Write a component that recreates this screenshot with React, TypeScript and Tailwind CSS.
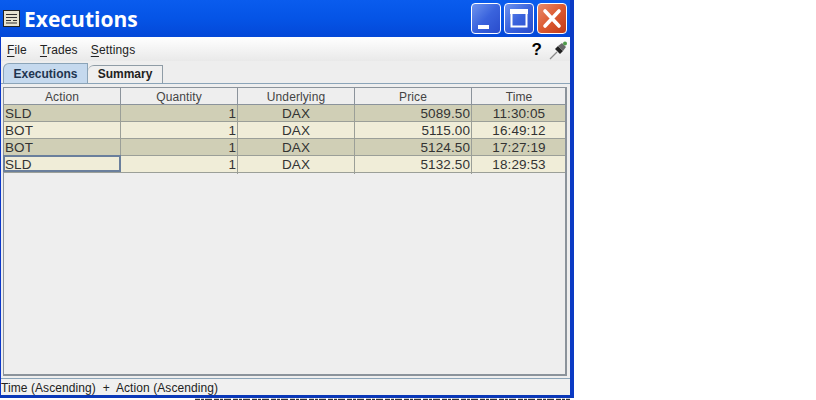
const rows = [
  ['SLD', '1', 'DAX', '5089.50', '11:30:05'],
  ['BOT', '1', 'DAX', '5115.00', '16:49:12'],
  ['BOT', '1', 'DAX', '5124.50', '17:27:19'],
  ['SLD', '1', 'DAX', '5132.50', '18:29:53'],
]

const headers = ['Action', 'Quantity', 'Underlying', 'Price', 'Time']
const colClass = 'grid grid-cols-[117px_117px_117px_117px_94px]'

const WinButton = ({kind}: {kind: 'min' | 'max' | 'close'}) => (
  <div
    className={`w-[30px] h-[31px] rounded-[4px] border border-white flex items-center justify-center ${
      kind === 'close'
        ? 'bg-gradient-to-br from-[#e88a6a] via-[#dc5a30] to-[#c03a18]'
        : 'bg-gradient-to-br from-[#6f93ee] via-[#3a63dd] to-[#2a4ccc]'
    }`}
  >
    <svg width="28" height="29" viewBox="0 0 28 29">
      {kind === 'min' && <rect x="6" y="21" width="11" height="4" fill="#fff" />}
      {kind === 'max' && <path d="M6.5 7.5h15v15h-15z M6 6h16v3H6z" fill="none" stroke="#fff" strokeWidth="2" />}
      {kind === 'close' && <path d="M7 7l14 15M21 7L7 22" stroke="#fff" strokeWidth="3.6" strokeLinecap="round" />}
    </svg>
  </div>
)

const MenuItem = ({first, rest}: {first: string; rest: string}) => (
  <span>
    <span className="underline underline-offset-2">{first}</span>
    {rest}
  </span>
)

export default function App() {
  return (
    <div className="w-[816px] h-[400px] bg-white overflow-hidden font-['Liberation_Sans',sans-serif]">
      <div className="w-[574px] h-[398px] flex flex-col bg-[#0a36c8] border-r-[4px] border-r-[#0b3ac4] border-b-[3px] border-b-[#0a38b8]">
        {/* title bar */}
        <div className="h-[37px] shrink-0 flex items-center pl-[3px] pr-[2px] bg-gradient-to-b from-[#0a5cee] via-[#0554e6] to-[#0448d8]">
          <svg width="17" height="17" viewBox="0 0 17 17" className="shrink-0">
            <rect x="0.5" y="0.5" width="16" height="16" fill="#e8e4d0" stroke="#222" />
            <path d="M3 4.5h11M3 7.5h11M3 10.5h5M10 10.5h4M3 13h11" stroke="#333" strokeWidth="1.2" />
          </svg>
          <span className="ml-[4px] mt-[2px] text-white text-[21px] leading-none font-bold font-['Open_Sans',sans-serif]">
            Executions
          </span>
          <div className="ml-auto flex gap-[3px] mb-[1px] mr-[1px]">
            <WinButton kind="min" />
            <WinButton kind="max" />
            <WinButton kind="close" />
          </div>
        </div>
        <div className="flex-1 flex flex-col bg-[#eeeeee] min-h-0 ml-[1px]">
          {/* menu */}
          <div className="h-[24px] shrink-0 flex items-center gap-[13px] pt-[1px] pl-[6px] pr-[1px] text-[12px] tracking-[0.15px] text-[#222] bg-gradient-to-b from-white to-[#e9e9e9]">
            <MenuItem first="F" rest="ile" />
            <MenuItem first="T" rest="rades" />
            <MenuItem first="S" rest="ettings" />
            <div className="ml-auto flex items-center gap-[7px]">
              <span className="text-[17px] leading-none font-bold text-black">?</span>
              <svg width="20" height="20" viewBox="0 0 20 20">
                <path d="M1 19l7-7" stroke="#8a8a8a" strokeWidth="1.2" />
                <path d="M6 9l5 5 3-3-5-5z" fill="#222" />
                <path d="M9 6l4-3 4 4-3 4z" fill="#6a6a6a" />
                <circle cx="16" cy="3.5" r="2" fill="#4f9a4a" />
              </svg>
            </div>
          </div>
          {/* tabs */}
          <div className="h-[22px] shrink-0 flex items-end pl-[2px] mt-[1px] border-b border-b-[#8ba4b8] text-[12px] font-bold">
            <div className="h-[20px] w-[85px] pt-[1px] flex items-center justify-center bg-[#c5d9ee] border border-[#8ba4b8] border-b-0 rounded-tl-[6px] text-[#1f3550]">
              Executions
            </div>
            <div className="h-[18px] w-[75px] pb-[1px] flex items-center justify-center bg-[#efefef] border border-[#8f9ca6] border-b-0 border-l-0 rounded-tl-[6px] text-[#222]">
              Summary
            </div>
          </div>
          {/* table */}
          <div className="flex-1 min-h-0 mt-[3px] mb-[2px] ml-[2px] mr-[3px] border border-[#8b939b] border-r-2 border-b-2">
            <div className={`${colClass} h-[17px] bg-[#eeeeee] border-b border-b-[#8b939b] text-[12px] leading-[19px] tracking-[0.1px] text-[#444]`}>
              {headers.map(h => (
                <div key={h} className="text-center border-r border-r-[#8b939b] last:border-r-0">
                  {h}
                </div>
              ))}
            </div>
            {rows.map((row, i) => (
              <div
                key={i}
                className={`${colClass} h-[17px] text-[13.5px] leading-[18px] tracking-[0.1px] border-b border-b-[#9b9f98] text-[#333] ${
                  i % 2 === 0 ? 'bg-[#d0cfb6]' : 'bg-[#f0edd8]'
                }`}
              >
                <div className={`${i === 3 ? 'border-2 border-[#6a7f9c] leading-[15px] h-[17px] -mt-[1px] -ml-[1px]' : 'pl-[1px] border-r border-r-[#9b9f98]'}`}>
                  {row[0]}
                </div>
                <div className="text-right pr-[1px] border-r border-r-[#9b9f98]">{row[1]}</div>
                <div className="text-center border-r border-r-[#9b9f98]">{row[2]}</div>
                <div className="text-right pr-[1px] border-r border-r-[#9b9f98]">{row[3]}</div>
                <div className="text-center">{row[4]}</div>
              </div>
            ))}
          </div>
          {/* status bar */}
          <div className="h-[17px] shrink-0 border-t border-t-[#8ba4b8] text-[12px] leading-[19px] tracking-[0.08px] text-[#222] whitespace-pre bg-[#f0f0f0]">
            Time (Ascending)  +  Action (Ascending)
          </div>
        </div>
      </div>
      {/* edge of the page behind the window, cut off by the crop */}
      <svg width="574" height="2" viewBox="0 0 574 2" className="block">
        <path d="M195 1.5H570" stroke="#333" strokeWidth="1.5" strokeDasharray="5 1 3 1 7 2" />
      </svg>
    </div>
  )
}
